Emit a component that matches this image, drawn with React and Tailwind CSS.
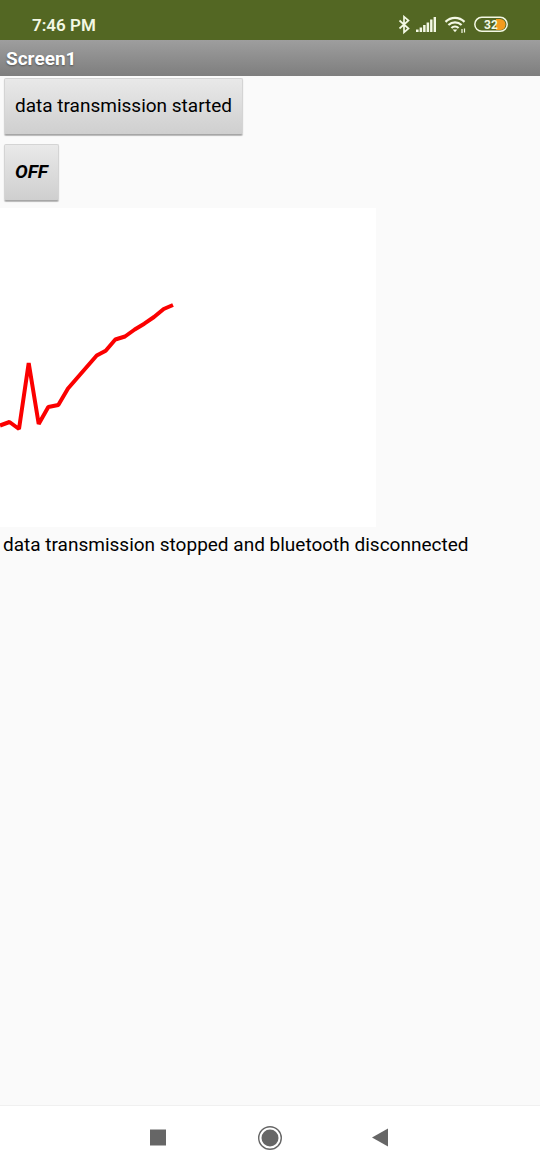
const readings = [
  [0, 217.5], [9.5, 214], [19, 221], [28.7, 155], [38.7, 216], [48.3, 199],
  [58.3, 197], [68, 180.5], [96.7, 147.5], [105.7, 142.7], [115.3, 131.5],
  [125, 128.5], [134.7, 121.5], [144.3, 115.7], [154, 109], [163.7, 101], [173, 97],
];

function StatusBar() {
  return (
    <header className="flex h-10 items-center justify-between bg-[#536723] pt-[10px] pr-8 pl-8 text-[#f3f8e4]">
      <time className="text-[17px] leading-6 font-semibold">7:46 PM</time>
      <div className="flex items-center">
        <svg className="mr-[6px] h-5 w-3" viewBox="0 0 12 20" fill="none" stroke="currentColor" strokeWidth="1.7" aria-label="Bluetooth">
          <path d="M1.500 5.500 10.500 13.500 6 17.300V1.700L10.500 5.500 1.500 13.500" />
        </svg>
        <svg className="mr-2 h-5 w-5" viewBox="0 0 20 20" fill="currentColor" aria-label="Mobile signal">
          <path d="M0 14.500h2.600V17H0zM3.600 12.500h2.500V17H3.600zM7.100 10h2.500v7H7.100zM10.600 7.500h2.500V17h-2.500zM14.100 4.500h2.400V17h-2.400zM17.600 2H20v15h-2.400z" />
        </svg>
        <svg className="mr-2 h-5 w-[22px]" viewBox="0 0 22 20" fill="none" stroke="currentColor" strokeWidth="2.2" aria-label="Wi-Fi">
          <path d="M1.500 6.900C6.900 1.600 15.100 1.600 20.500 6.900M4.400 10C8.300 6.400 13.700 6.400 17.600 10M7.400 13C9.500 11.100 12.500 11.100 14.600 13" />
          <path d="M8.700 14.500h4.600L11 17.200z" fill="currentColor" stroke="none" />
          <path d="M18 14v4M20.500 13.500v4" strokeWidth="1.200" />
        </svg>
        <svg className="h-5 w-[34px]" viewBox="0 0 34 20" aria-label="Battery 32 percent">
          <path d="M22 4h4a5.500 5.500 0 0 1 0 11H22z" fill="#f29b1d" />
          <rect x=".8" y="2.300" width="32.400" height="14" rx="7" fill="none" stroke="currentColor" strokeWidth="1.500" />
          <text x="17" y="13.500" textAnchor="middle" fill="currentColor" className="font-[Roboto] text-[12px] font-bold">32</text>
        </svg>
      </div>
    </header>
  );
}

const buttonStyle =
  "h-[57px] rounded-[2px] border border-[#d4d4d4] border-b-[#a6a6a6] bg-linear-to-b from-[#e9e9e9] to-[#cfcfcf] px-[10px] text-[19px] shadow-[0_1px_1px_#00000044]";

export default function App() {
  return (
    <div className="flex min-h-screen flex-col bg-[#fafafa] font-[Roboto,sans-serif] text-black">
      <StatusBar />
      <h1 className="h-9 bg-linear-to-b from-[#9e9e9e] to-[#7e7e7e] px-[6px] text-[19px] leading-[38px] font-bold text-white [text-shadow:0_1px_2px_#00000066]">
        Screen1
      </h1>
      <main className="flex flex-1 flex-col items-start pt-[2px]">
        <div className="flex flex-col items-start gap-[9px] px-1">
          <button type="button" className={buttonStyle}>data transmission started</button>
          <button type="button" className={`${buttonStyle} font-bold italic`}>OFF</button>
        </div>
        <svg className="mt-[7px] w-[70%] max-w-[376px] bg-white" viewBox="0 0 376 319" role="img" aria-label="Received data">
          <polyline points={readings.map((p) => p.join(",")).join(" ")} fill="none" stroke="#fb0000" strokeWidth="4" strokeLinejoin="bevel" />
        </svg>
        <p className="px-[3px] pt-1 text-[19px] leading-7">data transmission stopped and bluetooth disconnected</p>
      </main>
      <nav className="flex h-[65px] items-center justify-center gap-[90px] border-t border-[#f0f0f0] bg-white text-[#666]">
        <button type="button" aria-label="Recent apps">
          <svg className="size-5" viewBox="0 0 20 20" fill="currentColor"><path d="M2 1.500h16v16H2z" /></svg>
        </button>
        <button type="button" aria-label="Home">
          <svg className="size-6" viewBox="0 0 24 24" fill="currentColor">
            <circle cx="12" cy="12" r="11.300" fill="none" stroke="currentColor" strokeWidth="1.400" />
            <circle cx="12" cy="12" r="8.500" />
          </svg>
        </button>
        <button type="button" aria-label="Back">
          <svg className="size-5" viewBox="0 0 20 20" fill="currentColor"><path d="M0 9.500 16 .5v18z" /></svg>
        </button>
      </nav>
    </div>
  );
}
